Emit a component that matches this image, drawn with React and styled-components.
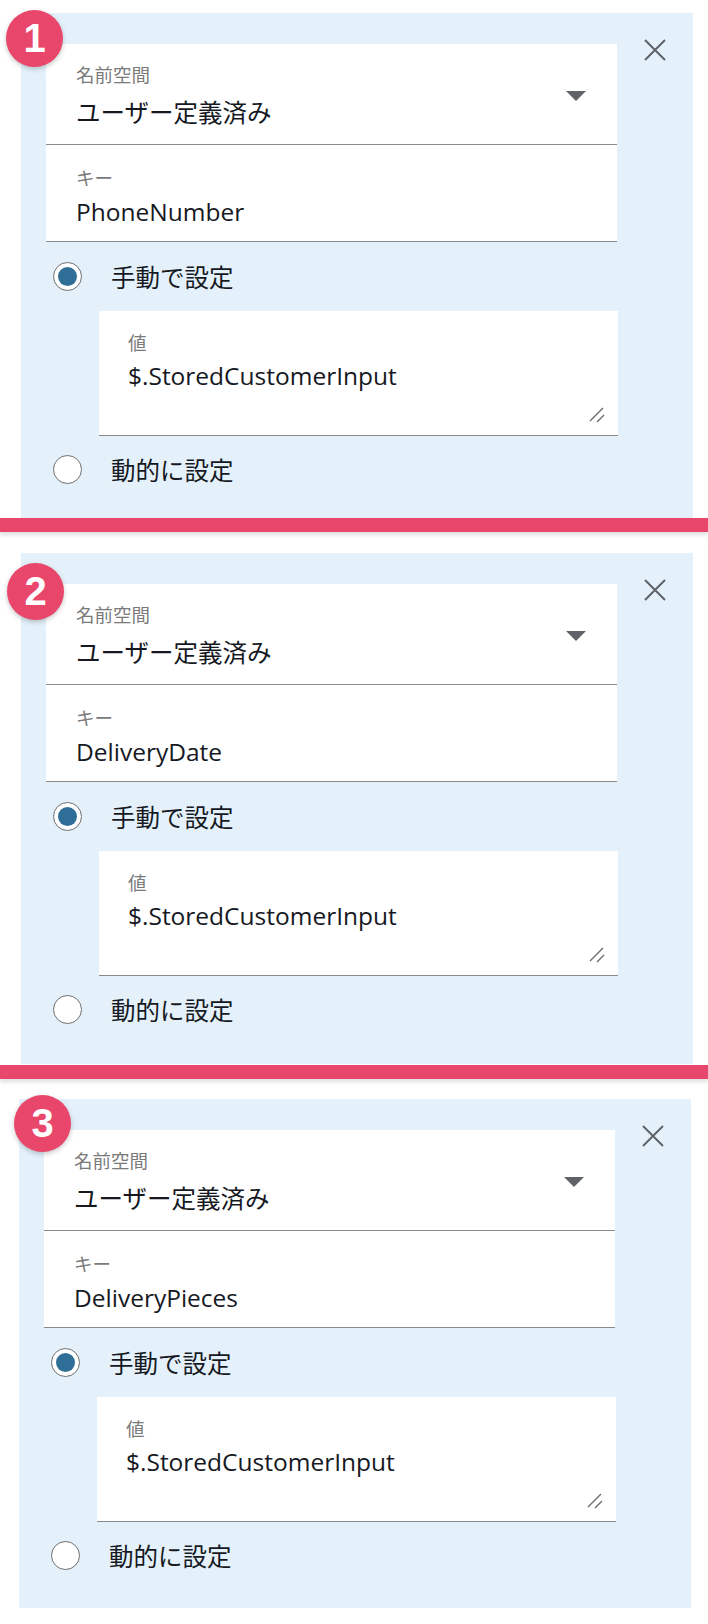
import React from "react";
import styled, { createGlobalStyle } from "styled-components";

const Global = createGlobalStyle`
  html, body { margin: 0; padding: 0; background: #ffffff; }
  body { font-family: "Open Sans", "Noto Sans CJK JP", sans-serif; }
  * { box-sizing: border-box; }
`;

const Page = styled.div`
  display: flex;
  flex-direction: column;
  padding-top: 13px;
  width: 708px;
`;

const Panel = styled.section`
  position: relative;
  width: 672px;
  margin-left: ${(p) => p.$ml}px;
  background: #e4f1fb;
  padding: 31px 0 ${(p) => p.$pb}px 25px;
  display: flex;
  flex-direction: column;
`;

const Bar = styled.div`
  height: 14px;
  width: 708px;
  background: #e9466c;
  box-shadow: 0 3px 4px rgba(0, 0, 0, 0.13);
  margin-top: ${(p) => p.$mt}px;
  margin-bottom: ${(p) => p.$mb}px;
  position: relative;
  z-index: 1;
`;

const Badge = styled.div`
  position: absolute;
  left: ${(p) => p.$x}px;
  top: ${(p) => p.$y}px;
  width: 57px;
  height: 57px;
  border-radius: 50%;
  background: #e9466c;
  box-shadow: 0 2px 5px rgba(0, 0, 0, 0.22);
  color: #ffffff;
  font-family: "Liberation Sans", Arial, sans-serif;
  font-weight: 700;
  font-size: 40px;
  display: flex;
  align-items: center;
  justify-content: center;
  z-index: 2;
`;

const TopRow = styled.div`
  display: flex;
  align-items: flex-start;
`;

const Card = styled.div`
  width: 571px;
  background: #ffffff;
  display: flex;
  flex-direction: column;
`;

const Field = styled.div`
  display: flex;
  align-items: center;
  justify-content: space-between;
  padding: ${(p) => p.$pt}px 31px ${(p) => p.$pb}px 30px;
  border-bottom: 1px solid #8a8a8a;
`;

const FieldText = styled.div`
  display: flex;
  flex-direction: column;
  gap: ${(p) => p.$gap}px;
`;

const Label = styled.div`
  font-family: "Noto Sans CJK JP", sans-serif;
  font-size: 18.5px;
  line-height: 24px;
  color: #7a7a7a;
`;

const Value = styled.div`
  font-family: "Open Sans", "Noto Sans CJK JP", sans-serif;
  font-size: 24.5px;
  line-height: 34px;
  color: #16191f;
  white-space: nowrap;
`;

const Caret = styled.svg`
  width: 20px;
  height: 10px;
  display: block;
`;

const CloseButton = styled.button`
  border: 0;
  background: transparent;
  padding: 0;
  margin: -5px 0 0 27px;
  width: 22px;
  height: 22px;
  display: block;
  cursor: pointer;
`;

const RadioRow = styled.label`
  display: flex;
  align-items: center;
  gap: 29px;
  height: ${(p) => p.$h}px;
  padding-left: 7px;
  font-family: "Noto Sans CJK JP", sans-serif;
  font-size: 24.5px;
  color: #16191f;
`;

const RadioCircle = styled.span`
  width: 29px;
  height: 29px;
  border-radius: 50%;
  border: 1px solid #6e6e6e;
  background: #ffffff;
  display: flex;
  align-items: center;
  justify-content: center;
  flex: none;
  &::after {
    content: "";
    width: 19px;
    height: 19px;
    border-radius: 50%;
    background: ${(p) => (p.$checked ? "#2f6f97" : "transparent")};
  }
`;

const TextArea = styled.div`
  position: relative;
  margin-left: 53px;
  width: 519px;
  height: 125px;
  background: #ffffff;
  border-bottom: 1px solid #8a8a8a;
  padding: 19px 0 0 29px;
  display: flex;
  flex-direction: column;
  gap: 5px;
`;

const Resize = styled.svg`
  position: absolute;
  right: 13px;
  bottom: 12px;
  width: 16px;
  height: 16px;
`;

const Radio = ({ checked, children, h }) => (
  <RadioRow $h={h}>
    <RadioCircle $checked={checked} />
    <span>{children}</span>
  </RadioRow>
);

const Block = ({ num, keyName, ml, pb, bx, by }) => (
  <Panel $ml={ml} $pb={pb}>
    <Badge $x={bx} $y={by}>{num}</Badge>
    <TopRow>
      <Card>
        <Field $pt={18} $pb={14}>
          <FieldText $gap={10}>
            <Label>名前空間</Label>
            <Value>ユーザー定義済み</Value>
          </FieldText>
          <Caret viewBox="0 0 20 10">
            <polygon points="0,0 20,0 10,10" fill="#5f6368" />
          </Caret>
        </Field>
        <Field $pt={20} $pb={12}>
          <FieldText $gap={6}>
            <Label>キー</Label>
            <Value>{keyName}</Value>
          </FieldText>
        </Field>
      </Card>
      <CloseButton aria-label="close">
        <svg width="22" height="22" viewBox="0 0 22 22">
          <path d="M1 1 L21 21 M21 1 L1 21" stroke="#5f6368" strokeWidth="2" fill="none" />
        </svg>
      </CloseButton>
    </TopRow>
    <Radio checked h={69}>手動で設定</Radio>
    <TextArea>
      <Label>値</Label>
      <Value>$.StoredCustomerInput</Value>
      <Resize viewBox="0 0 16 16">
        <path d="M1 14 L14 1 M8 15 L15 8" stroke="#6b6b6b" strokeWidth="1.4" fill="none" />
      </Resize>
    </TextArea>
    <Radio h={66}>動的に設定</Radio>
  </Panel>
);

export default function App() {
  return (
    <>
      <Global />
      <Page>
        <Block num="1" keyName="PhoneNumber" ml={21} pb={16} bx={-15} by={-3} />
        <Bar $mt={0} $mb={21} />
        <Block num="2" keyName="DeliveryDate" ml={21} pb={22} bx={-14} by={10} />
        <Bar $mt={1} $mb={20} />
        <Block num="3" keyName="DeliveryPieces" ml={19} pb={20} bx={-5} by={-4} />
      </Page>
    </>
  );
}
